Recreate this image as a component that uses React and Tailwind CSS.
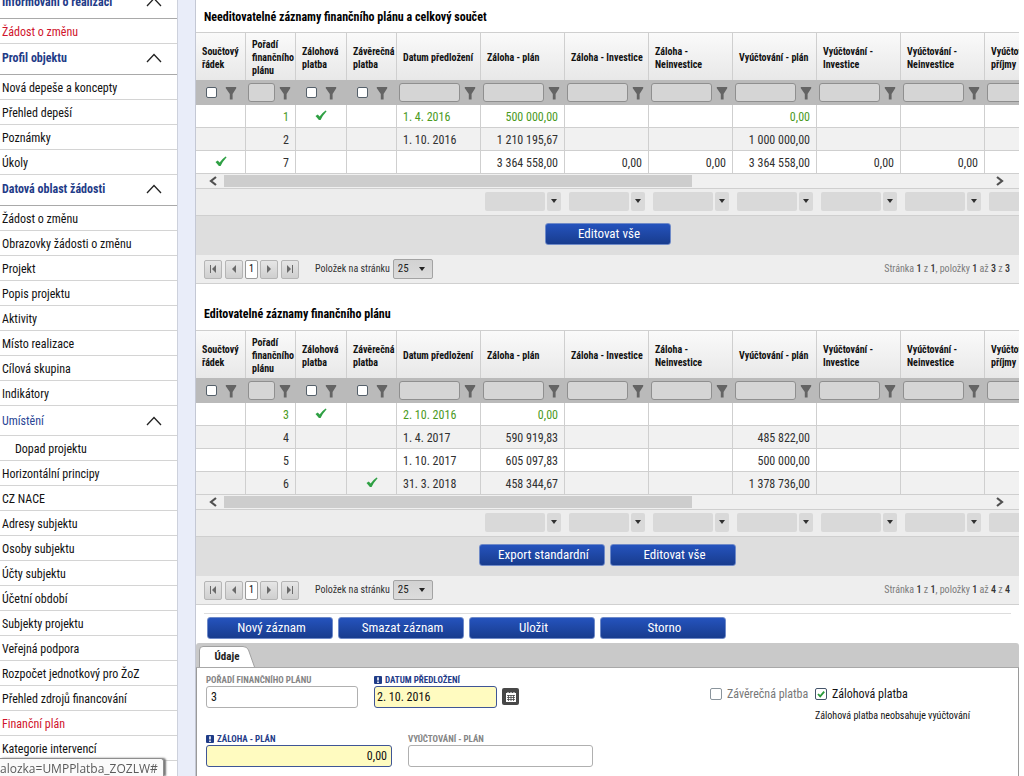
import React from 'react';

const FONT = "font-['Roboto_Condensed','Liberation_Sans_Narrow',Roboto,'Liberation_Sans',sans-serif]";

const menu = [
  { label: 'Informování o realizaci', kind: 'head' },
  { label: 'Žádost o změnu', kind: 'active' },
  { label: 'Profil objektu', kind: 'head' },
  { label: 'Nová depeše a koncepty' },
  { label: 'Přehled depeší' },
  { label: 'Poznámky' },
  { label: 'Úkoly' },
  { label: 'Datová oblast žádosti', kind: 'head' },
  { label: 'Žádost o změnu' },
  { label: 'Obrazovky žádosti o změnu' },
  { label: 'Projekt' },
  { label: 'Popis projektu' },
  { label: 'Aktivity' },
  { label: 'Místo realizace' },
  { label: 'Cílová skupina' },
  { label: 'Indikátory' },
  { label: 'Umístění', kind: 'group' },
  { label: 'Dopad projektu', kind: 'nested' },
  { label: 'Horizontální principy' },
  { label: 'CZ NACE' },
  { label: 'Adresy subjektu' },
  { label: 'Osoby subjektu' },
  { label: 'Účty subjektu' },
  { label: 'Účetní období' },
  { label: 'Subjekty projektu' },
  { label: 'Veřejná podpora' },
  { label: 'Rozpočet jednotkový pro ŽoZ' },
  { label: 'Přehled zdrojů financování' },
  { label: 'Finanční plán', kind: 'active' },
  { label: 'Kategorie intervencí' },
];

const columns = [
  { label: 'Součtový řádek', type: 'check', width: 'w-[50px]' },
  { label: 'Pořadí finančního plánu', type: 'number', width: 'w-[50px]' },
  { label: 'Zálohová platba', type: 'check', width: 'w-[51px]' },
  { label: 'Závěrečná platba', type: 'check', width: 'w-[50px]' },
  { label: 'Datum předložení', type: 'date', width: 'w-[84px]' },
  { label: 'Záloha - plán', type: 'number', width: 'w-[84px]' },
  { label: 'Záloha - Investice', type: 'number', width: 'w-[84px]' },
  { label: 'Záloha - Neinvestice', type: 'number', width: 'w-[84px]' },
  { label: 'Vyúčtování - plán', type: 'number', width: 'w-[84px]' },
  { label: 'Vyúčtování - Investice', type: 'number', width: 'w-[84px]' },
  { label: 'Vyúčtování - Neinvestice', type: 'number', width: 'w-[84px]' },
  { label: 'Vyúčtování - příjmy', type: 'number', width: 'w-[84px]' },
];

const lockedRows = [
  { green: true, cells: ['', '1', true, '', '1. 4. 2016', '500 000,00', '', '', '0,00', '', '', ''] },
  { cells: ['', '2', '', '', '1. 10. 2016', '1 210 195,67', '', '', '1 000 000,00', '', '', ''] },
  { cells: [true, '7', '', '', '', '3 364 558,00', '0,00', '0,00', '3 364 558,00', '0,00', '0,00', ''] },
];

const editableRows = [
  { green: true, cells: ['', '3', true, '', '2. 10. 2016', '0,00', '', '', '', '', '', ''] },
  { cells: ['', '4', '', '', '1. 4. 2017', '590 919,83', '', '', '485 822,00', '', '', ''] },
  { cells: ['', '5', '', '', '1. 10. 2017', '605 097,83', '', '', '500 000,00', '', '', ''] },
  { cells: ['', '6', '', true, '31. 3. 2018', '458 344,67', '', '', '1 378 736,00', '', '', ''] },
];

function Chevron() {
  return (
    <svg viewBox="0 0 16 10" className="h-[10px] w-4 shrink-0" fill="none" stroke="#222" strokeWidth="1.3">
      <path d="M1 9 L8 1.5 L15 9" />
    </svg>
  );
}

function Funnel() {
  return (
    <svg viewBox="0 0 12 14" className="h-[14px] w-3 shrink-0" fill="#646464">
      <path d="M0.8 1 H11.2 V2.2 L7.6 8 V13.4 H4.8 V8 L0.8 2.2 Z" />
    </svg>
  );
}

function Tick() {
  return (
    <svg viewBox="0 0 12 11" className="mx-auto mb-1 block h-[11px] w-3" fill="#2fa044">
      <path d="M0.5 6 L2.8 4.6 L4.6 6.6 Q7 3 10.6 0.5 L11.6 1.2 Q7.600 5.500 5.600 10 L3.9 10 Z" />
    </svg>
  );
}

function MenuItem({ item }) {
  const { label, kind } = item;
  if (kind === 'head') {
    return (
      <li className="h-[31px] border-b border-[#a9a9a9]">
        <button type="button" className="flex h-full w-full items-center justify-between pr-[15px] pb-[2px] pl-[2px] text-left font-bold text-[#1f3c88]">
          {label}
          <Chevron />
        </button>
      </li>
    );
  }
  if (kind === 'group') {
    return (
      <li className="h-[30px] border-b border-[#d4d4d4]">
        <button type="button" className="flex h-full w-full items-center justify-between pr-[15px] pl-[2px] text-left text-[#2a4595]">
          {label}
          <Chevron />
        </button>
      </li>
    );
  }
  const tone = kind === 'active' ? 'pl-[2px] text-[#d0142c]' : kind === 'nested' ? 'pl-[15px] text-[#111]' : 'pl-[2px] text-[#111]';
  return (
    <li className="h-[25px] border-b border-[#d4d4d4]">
      <a href="#" className={`block leading-[26px] whitespace-nowrap ${tone}`}>{label}</a>
    </li>
  );
}

function BlueButton({ children }) {
  return (
    <button
      type="button"
      className="h-[22px] w-[126px] rounded-[3px] border border-[#6f8ac8] bg-linear-to-b from-[#2553bd] to-[#183c8e] pl-[3px] text-[13px] leading-5 text-white"
    >
      {children}
    </button>
  );
}

function FilterCell({ column }) {
  if (column.type === 'check') {
    return (
      <div className="flex items-center justify-center gap-2">
        <input
          type="checkbox"
          aria-label={`Filtr ${column.label}`}
          className="h-[11px] w-[11px] appearance-none rounded-[2px] border border-[#55606a] bg-white"
        />
        <Funnel />
      </div>
    );
  }
  return (
    <div className="flex items-center gap-1 pr-[5px] pl-[2px]">
      <input
        type="text"
        aria-label={`Filtr ${column.label}`}
        className="h-[19px] min-w-0 flex-1 rounded-[3px] border border-[#8f8f8f] bg-[#d5d5d5]"
      />
      <Funnel />
    </div>
  );
}

function Scrollbar() {
  return (
    <div className="flex h-[15px] items-center border-b border-[#cfcfcf] bg-[#f0f0f0]">
      <button type="button" aria-label="Posunout vlevo" className="flex w-7 justify-center pl-[6px]">
        <svg viewBox="0 0 8 10" className="h-[10px] w-2" fill="none" stroke="#505050" strokeWidth="2.2">
          <path d="M7 1 L2 5 L7 9" />
        </svg>
      </button>
      <div className="h-3 flex-1">
        <div className="h-full w-[61%] bg-[#cdcdcd]" />
      </div>
      <button type="button" aria-label="Posunout vpravo" className="flex w-7 justify-center pr-[10px]">
        <svg viewBox="0 0 8 10" className="h-[10px] w-2" fill="none" stroke="#505050" strokeWidth="2.2">
          <path d="M1 1 L6 5 L1 9" />
        </svg>
      </button>
    </div>
  );
}

function AggregateRow() {
  return (
    <div className="h-[26px] overflow-hidden bg-[#ededed] pb-[2px] pl-[289px]">
      <div className="flex h-full items-center gap-2">
        {columns.slice(5).map((column) => (
          <div key={column.label} className="flex w-[76px] shrink-0 gap-[2px]">
            <input type="text" aria-label={`Souhrn ${column.label}`} className="h-[19px] w-[60px] rounded-[2px] bg-[#d9d9d9]" />
            <button type="button" aria-label={`Vybrat souhrn ${column.label}`} className="flex h-[19px] w-[14px] items-center justify-center rounded-[2px] bg-[#d9d9d9]">
              <svg viewBox="0 0 6 4" className="h-1 w-[6px]" fill="#303030">
                <path d="M0 0 H6 L3 4 Z" />
              </svg>
            </button>
          </div>
        ))}
      </div>
    </div>
  );
}

function PagerButton({ label, path }) {
  return (
    <button
      type="button"
      aria-label={label}
      className="flex h-[19px] w-[18px] items-center justify-center rounded-[2px] border border-[#b5b5b5] bg-linear-to-b from-[#e6e6e6] to-[#cfcfcf]"
    >
      <svg viewBox="0 0 8 8" className="h-2 w-2" fill="#6a6a6a">
        <path d={path} />
      </svg>
    </button>
  );
}

function Pager({ id, count }) {
  return (
    <div className="flex h-[29px] items-center justify-between border-b border-[#d0d0d0] bg-[#eeeeee] pr-[9px] pl-2 text-[10px] leading-4">
      <div className="flex items-center">
        <div className="flex gap-[3px]">
          <PagerButton label="První stránka" path="M1 0 H2 V8 H1 Z M7 0 V8 L3 4 Z" />
          <PagerButton label="Předchozí stránka" path="M6 0 V8 L2 4 Z" />
        </div>
        <button type="button" className="mx-[2px] h-[19px] w-[13px] rounded-[2px] border border-[#9a9a9a] bg-white text-black">1</button>
        <div className="flex gap-[3px]">
          <PagerButton label="Další stránka" path="M2 0 V8 L6 4 Z" />
          <PagerButton label="Poslední stránka" path="M6 0 H7 V8 H6 Z M1 0 V8 L5 4 Z" />
        </div>
        <label htmlFor={id} className="pr-[3px] pl-4 text-[#333]">Položek na stránku</label>
        <div className="relative">
          <select
            id={id}
            defaultValue="25"
            className="h-5 w-10 appearance-none rounded-[2px] border border-[#a3a3a3] bg-linear-to-b from-[#d2d2d2] to-[#dcdcdc] pl-1 text-[11px] text-[#222]"
          >
            <option>25</option>
          </select>
          <svg viewBox="0 0 6 4" className="pointer-events-none absolute top-2 right-2 h-1 w-[6px]" fill="#222">
            <path d="M0 0 H6 L3 4 Z" />
          </svg>
        </div>
      </div>
      <p className="text-[#7c7c7c]">
        Stránka <b className="font-medium text-[#333]">1</b> z <b className="font-medium text-[#333]">1</b>, položky{' '}
        <b className="font-medium text-[#333]">1</b> až <b className="font-medium text-[#333]">{count}</b> z{' '}
        <b className="font-medium text-[#333]">{count}</b>
      </p>
    </div>
  );
}

function Grid({ id, rows, buttons }) {
  return (
    <div>
      <div className="overflow-hidden">
        <table className="w-[873px] table-fixed border-separate border-spacing-0">
          <colgroup>
            {columns.map((column) => (
              <col key={column.label} className={column.width} />
            ))}
          </colgroup>
          <thead>
            <tr>
              {columns.map((column) => (
                <th
                  key={column.label}
                  scope="col"
                  className="h-12 border-t border-r border-[#cfcfcf] bg-linear-to-b from-[#fafafa] to-[#e8e8e8] p-0 pt-[2px] pl-[6px] text-left align-middle text-[10px] leading-[13px] font-bold text-[#111]"
                >
                  {column.label}
                </th>
              ))}
            </tr>
            <tr>
              {columns.map((column) => (
                <td key={column.label} className="h-[25px] bg-[#bababa] p-0">
                  <FilterCell column={column} />
                </td>
              ))}
            </tr>
          </thead>
          <tbody>
            {rows.map((row, r) => (
              <tr key={row.cells[1]} className={`${r % 2 ? 'bg-[#f1f1f1]' : 'bg-white'} ${row.green ? 'text-[#4a9a1e]' : 'text-[#303030]'}`}>
                {row.cells.map((cell, c) => (
                  <td
                    key={columns[c].label}
                    className={`h-[23px] border-r border-b border-[#cfcfcf] px-[6px] pt-[2px] pb-0 text-xs leading-4 whitespace-nowrap ${columns[c].type === 'number' ? 'text-right' : 'text-left'}`}
                  >
                    {cell === true ? <Tick /> : cell}
                  </td>
                ))}
              </tr>
            ))}
          </tbody>
        </table>
      </div>
      <Scrollbar />
      <AggregateRow />
      <div className="flex h-10 items-center justify-center gap-[5px] border-t border-[#cfcfcf] bg-[#dedede] pb-[3px]">
        {buttons.map((label) => (
          <BlueButton key={label}>{label}</BlueButton>
        ))}
      </div>
      <Pager id={id} count={String(rows.length)} />
    </div>
  );
}

function Required() {
  return (
    <svg viewBox="0 0 8 8" className="h-2 w-2 shrink-0">
      <rect width="8" height="8" rx="1" fill="#1f3c88" />
      <path d="M3.2 1.2 H4.8 V4.6 H3.2 Z M3.2 5.5 H4.8 V6.9 H3.2 Z" fill="#fff" />
    </svg>
  );
}

function Field({ id, label, value, required, width, align }) {
  return (
    <div className={width}>
      <label
        htmlFor={id}
        className={`flex h-3 items-center gap-[3px] text-[9px] leading-3 font-bold whitespace-nowrap uppercase ${required ? 'text-[#1f3c88]' : 'text-[#858585]'}`}
      >
        {required && <Required />}
        {label}
      </label>
      <input
        id={id}
        type="text"
        defaultValue={value}
        className={`h-[22px] w-full rounded-[3px] border text-xs leading-5 text-[#111] ${required ? 'border-[#3f5596] bg-[#fffbc0]' : 'border-[#b0b0b0] bg-white'} ${align}`}
      />
    </div>
  );
}

function CheckField({ id, label, checked, tone }) {
  return (
    <div className={`flex items-center gap-[5px] ${tone}`}>
      <span className="relative flex">
        <input
          id={id}
          type="checkbox"
          defaultChecked={checked}
          className="h-3 w-3 appearance-none rounded-[2px] border border-[#8a949c] bg-white checked:border-[#44546a]"
        />
        {checked && (
          <svg viewBox="0 0 12 12" className="pointer-events-none absolute inset-0 h-3 w-3" fill="none" stroke="#2a9a3a" strokeWidth="1.8">
            <path d="M3 6 L5.2 8.4 L9.2 3.6" />
          </svg>
        )}
      </span>
      <label htmlFor={id} className="text-xs leading-4 whitespace-nowrap">{label}</label>
    </div>
  );
}

export default function App() {
  return (
    <div className={`flex h-screen overflow-hidden bg-white text-xs ${FONT}`}>
      <nav className="w-[178px] shrink-0 border-r border-[#cdd1dc]">
        <ul className="-mt-3">
          {menu.map((item, i) => (
            <MenuItem key={i} item={item} />
          ))}
        </ul>
      </nav>
      <div className="w-[17px] shrink-0 bg-[#e9edf9]" />
      <main className="mr-[5px] flex min-w-0 flex-1 flex-col border-l border-[#c4c8d4]">
        <h2 className="h-8 shrink-0 pt-px pl-2 text-xs leading-8 font-bold text-black">Needitovatelné záznamy finančního plánu a celkový součet</h2>
        <Grid id="size-locked" rows={lockedRows} buttons={['Editovat vše']} />
        <h2 className="h-[46px] shrink-0 pt-[14px] pl-2 text-xs leading-8 font-bold text-black">Editovatelné záznamy finančního plánu</h2>
        <Grid id="size-editable" rows={editableRows} buttons={['Export standardní', 'Editovat vše']} />
        <div className="mx-2 mt-2 border-t border-[#dddddd]" />
        <div className="flex gap-[5px] pt-[3px] pb-1 pl-[11px]">
          {['Nový záznam', 'Smazat záznam', 'Uložit', 'Storno'].map((label) => (
            <BlueButton key={label}>{label}</BlueButton>
          ))}
        </div>
        <div role="tablist" className="flex h-[25px] shrink-0 items-end rounded-t-[3px] border-b border-[#a8a8a8] bg-[#c9c9c9] pl-[3px]">
          <button type="button" role="tab" aria-selected="true" className="relative h-[21px] w-14 text-[11px] leading-5 font-bold text-[#222]">
            <svg viewBox="0 0 56 21" className="absolute inset-0 h-[21px] w-14" fill="#fff" stroke="#a0a0a0">
              <path d="M0.5 21 V4 Q0.5 0.5 4 0.5 H44 Q48 0.5 49.5 4 L55.5 21" />
            </svg>
            <span className="relative">Údaje</span>
          </button>
        </div>
        <form className="grid flex-1 grid-cols-[1fr_308px] content-start border-x border-[#9a9a9a] pt-[6px] pl-[9px]">
          <div className="flex flex-col gap-[25px]">
            <div className="flex items-start gap-4">
              <Field id="order" label="Pořadí finančního plánu" value="3" width="w-[152px]" align="px-1 text-left" />
              <div className="flex items-end gap-[5px]">
                <Field id="date" label="Datum předložení" value="2. 10. 2016" required width="w-[123px]" align="px-[2px] text-left" />
                <button type="button" aria-label="Kalendář" className="mb-[3px] flex h-[17px] w-[17px] items-center justify-center rounded-[2px] bg-[#484848]">
                  <svg viewBox="0 0 12 12" className="h-3 w-3">
                    <path d="M1 2 H2.500 V1 H3.500 V2 H5.500 V1 H6.500 V2 H8.500 V1 H9.500 V2 H11 V11 H1 Z" fill="#fff" />
                    <path d="M2 4.500 H10 M2 6.500 H10 M2 8.500 H10 M3.500 4 V10 M6 4 V10 M8.500 4 V10" stroke="#484848" strokeWidth="0.8" />
                  </svg>
                </button>
              </div>
            </div>
            <div className="flex gap-4">
              <Field id="advance" label="Záloha - plán" value="0,00" required width="w-[186px]" align="px-1 text-right" />
              <Field id="billing" label="Vyúčtování - plán" value="" width="w-[185px]" align="px-1 text-left" />
            </div>
          </div>
          <div className="flex items-start pt-3">
            <div className="w-[105px]">
              <CheckField id="final" label="Závěrečná platba" tone="text-[#777]" />
            </div>
            <div>
              <CheckField id="deposit" label="Zálohová platba" checked tone="text-[#111]" />
              <p className="mt-2 text-[10px] leading-3 text-[#111]">Zálohová platba neobsahuje vyúčtování</p>
            </div>
          </div>
        </form>
      </main>
      <div role="status" className="fixed bottom-0 left-0 h-[18px] rounded-tr-[3px] border-t border-r border-[#8e8e8e] bg-[#fafafa] pr-[5px] font-['Open_Sans',sans-serif] text-xs leading-5 text-[#5a5a5a] shadow-[2px_0_2px_#777]">
        alozka=UMPPlatba_ZOZLW#
      </div>
    </div>
  );
}
